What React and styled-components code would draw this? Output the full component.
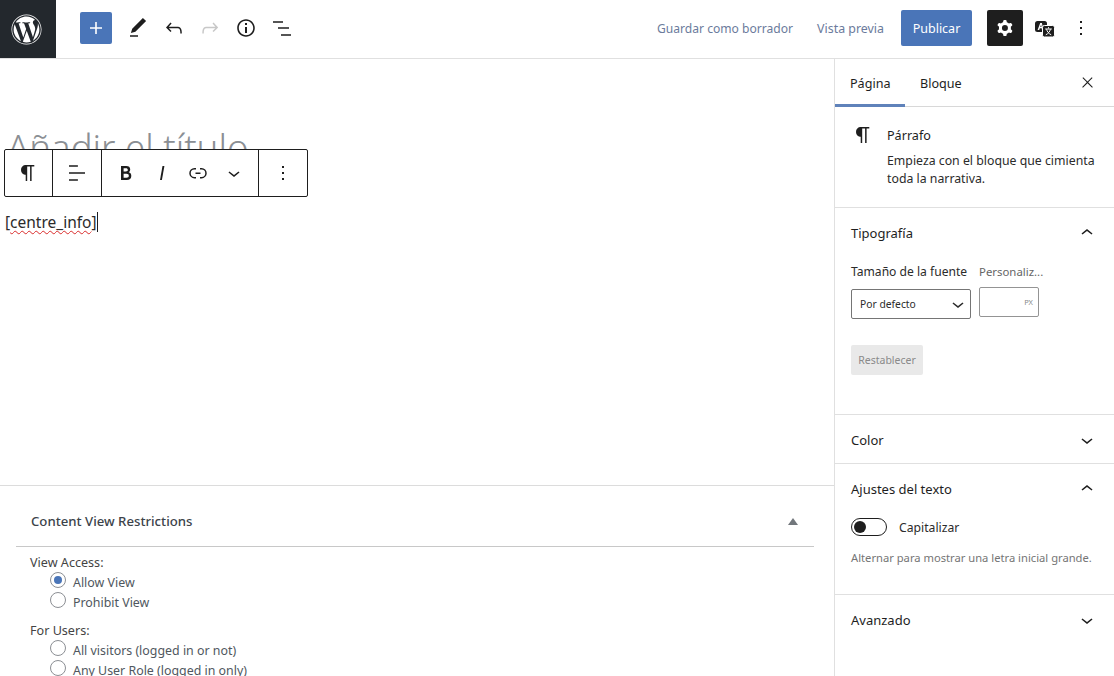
import React from "react";
import styled, { createGlobalStyle } from "styled-components";
import { FaWordpress } from "react-icons/fa";

const FONT = `"Noto Sans", "Open Sans", sans-serif`;

const Global = createGlobalStyle`
  html, body { margin: 0; padding: 0; height: 676px; overflow: hidden; background: #fff; }
  body { font-family: ${FONT}; font-size: 13px; color: #1e1e1e; -webkit-font-smoothing: antialiased; }
  * { box-sizing: border-box; }
`;

const P = {
  plus: "M18 11.2h-5.2V6h-1.6v5.2H6v1.6h5.2V18h1.6v-5.2H18z",
  pencil: "M20.1 5.1L16.9 2 6.2 12.7l-1.3 4.4 4.5-1.3L20.1 5.1zM4 20.8h8v-1.5H4v1.5z",
  undo: "M18.3 11.7c-.6-.6-1.4-.9-2.3-.9H6.7l2.9-3.3-1.1-1-4.5 5L8.5 16l1-1-2.7-2.7H16c.5 0 .9.2 1.3.5 1 1 1 3.4 1 4.5v.3h1.5v-.2c0-1.5 0-4.3-1.5-5.7z",
  redo: "M15.6 6.5l-1.1 1 2.9 3.3H8c-.9 0-1.7.3-2.3.9-1.4 1.5-1.4 4.2-1.4 5.6v.2h1.5v-.3c0-1.1 0-3.5 1-4.5.3-.3.7-.5 1.3-.5h9.2L14.5 15l1.1 1.1 4.6-4.6-4.6-5z",
  info: "M12 3.2c-4.8 0-8.8 3.9-8.8 8.8 0 4.8 3.9 8.8 8.8 8.8 4.8 0 8.8-3.9 8.8-8.8 0-4.8-4-8.8-8.8-8.8zm0 16c-4 0-7.2-3.3-7.2-7.2C4.8 8 8 4.8 12 4.8s7.2 3.3 7.2 7.2c0 4-3.2 7.2-7.2 7.2zM11 17h2v-6h-2v6zm0-8h2V7h-2v2z",
  list: "M3 5.2h10v1.6H3zM8 11.2h11v1.6H8zM11 18.2h10v1.6H11z",
  para: "M18.3 4H9.9v-.1l-.9.2c-2.3.4-4 2.4-4 4.8s1.7 4.4 4 4.8l.7.1V20h1.5V5.5h2.9V20h1.5V5.5h2.7V4z",
  align: "M4 19.8h8.9v-1.5H4v1.5zm8.9-15.6H4v1.5h8.9V4.2zm-8.9 7v1.5h16v-1.5H4z",
  bold: "M14.7 11.3c1-.6 1.5-1.6 1.5-3 0-2.3-1.3-3.4-4-3.4H7v14h5.8c1.4 0 2.5-.3 3.3-1 .8-.7 1.2-1.7 1.2-2.9.1-1.9-.8-3.1-2.6-3.7zm-5.1-4h2.3c.6 0 1.1.1 1.4.4.3.3.5.7.5 1.2s-.2 1-.5 1.2c-.3.3-.8.4-1.4.4H9.6V7.3zm4.6 9c-.4.3-1 .4-1.7.4H9.6v-3.9h2.9c.7 0 1.3.2 1.7.5.4.3.6.8.6 1.5s-.2 1.2-.6 1.5z",
  italic: "M12.5 5L10 19h1.9l2.5-14z",
  link: "M10 17.389H8.444A5.194 5.194 0 1 1 8.444 7H10v1.5H8.444a3.694 3.694 0 0 0 0 7.389H10v1.5ZM14 7h1.556a5.194 5.194 0 0 1 0 10.39H14v-1.5h1.556a3.694 3.694 0 0 0 0-7.39H14V7Zm-4.5 6h5v-1.5h-5V13Z",
  down: "M17.5 11.6L12 16l-5.5-4.4.9-1.2L12 14l4.5-3.6 1 1.2z",
  up: "M6.5 12.4L12 8l5.5 4.4-.9 1.2L12 10l-4.5 3.6-1-1.2z",
  more: "M13 19h-2v-2h2v2zm0-6h-2v-2h2v2zm0-6h-2V5h2v2z",
  close: "M13 11.8l6.1-6.3-1-1-6.1 6.2-6.1-6.2-1 1 6.1 6.3-6.5 6.7 1 1 6.5-6.6 6.5 6.6 1-1z",
  cog: "M10.289 4.836A1 1 0 0 1 11.275 4h1.306a1 1 0 0 1 .987.836l.244 1.466c.787.26 1.503.679 2.108 1.218l1.393-.522a1 1 0 0 1 1.216.437l.653 1.13a1 1 0 0 1-.23 1.273l-1.148.944a6.025 6.025 0 0 1 0 2.435l1.149.946a1 1 0 0 1 .23 1.272l-.653 1.13a1 1 0 0 1-1.216.437l-1.394-.522c-.605.54-1.32.958-2.108 1.218l-.244 1.466a1 1 0 0 1-.987.836h-1.306a1 1 0 0 1-.986-.836l-.244-1.466a5.995 5.995 0 0 1-2.108-1.218l-1.394.522a1 1 0 0 1-1.217-.436l-.653-1.131a1 1 0 0 1 .23-1.272l1.149-.946a6.026 6.026 0 0 1 0-2.435l-1.148-.944a1 1 0 0 1-.23-1.272l.653-1.131a1 1 0 0 1 1.217-.437l1.393.522a5.994 5.994 0 0 1 2.108-1.218l.244-1.466ZM14.929 12a3 3 0 1 1-6 0 3 3 0 0 1 6 0Z",
};

const Icon = ({ d, size = 24, color = "currentColor" }) => (
  <svg width={size} height={size} viewBox="0 0 24 24" fill={color} fillRule="evenodd" clipRule="evenodd" style={{ display: "block" }}>
    <path d={d} />
  </svg>
);

const TranslateIcon = () => (
  <svg width="22" height="20" viewBox="0 0 22 20" style={{ display: "block" }}>
    <rect x="1" y="3" width="12" height="11" rx="2.5" fill="#1e1e1e" />
    <path d="M3.6 12 6.2 5h1.7l1.5 7H8l-.3-1.7H5.8L5.2 12zM6.3 8.9h1.2l-.4-2.3z" fill="#fff" />
    <rect x="8.5" y="7.5" width="12" height="11.5" rx="1.8" fill="#1e1e1e" stroke="#fff" strokeWidth="1" />
    <path d="M14.5 9.2v1.3M11.2 11h6.6M12.6 11.2c.4 2.2 2 4.4 4.6 5.6M16.4 11.2c-.4 2.2-2 4.4-4.6 5.6" stroke="#fff" strokeWidth="1" fill="none" />
  </svg>
);

const Page = styled.div`
  width: 1114px;
  height: 676px;
  display: flex;
  flex-direction: column;
  overflow: hidden;
`;

const Header = styled.header`
  height: 59px;
  flex: none;
  display: flex;
  align-items: center;
  border-bottom: 1px solid #e0e0e0;
`;

const Logo = styled.div`
  width: 56px;
  height: 58px;
  padding-right: 4px;
  background: #23282d;
  color: #fff;
  display: flex;
  align-items: center;
  justify-content: center;
`;

const Tools = styled.div`
  display: flex;
  align-items: center;
  margin-left: 24px;
  padding-bottom: 2px;
`;

const Inserter = styled.button`
  width: 32px;
  height: 32px;
  margin-right: 8px;
  padding: 0;
  border: 0;
  border-radius: 2px;
  background: #4a75b8;
  color: #fff;
  display: flex;
  align-items: center;
  justify-content: center;
`;

const ToolButton = styled.button`
  width: 36px;
  height: 36px;
  padding: 0;
  border: 0;
  border-radius: 2px;
  margin-right: ${(p) => (p.$active ? "4px" : "0")};
  background: ${(p) => (p.$active ? "#1e1e1e" : "transparent")};
  color: ${(p) => (p.$active ? "#fff" : p.$muted ? "#c8c8c8" : "#1e1e1e")};
  display: flex;
  align-items: center;
  justify-content: center;
`;

const Actions = styled.div`
  margin-left: auto;
  display: flex;
  align-items: center;
  padding: 0 15px 2px 0;
`;

const LinkButton = styled.span`
  font-size: ${(p) => p.$size}px;
  color: #6b7b9c;
  margin-right: ${(p) => p.$gap}px;
  white-space: nowrap;
`;

const Publish = styled.button`
  width: 71px;
  height: 36px;
  margin-right: 15px;
  border: 0;
  border-radius: 2px;
  background: #4a75b8;
  color: #fff;
  font: 12.5px ${FONT};
  padding: 0;
`;

const Body = styled.div`
  flex: 1;
  min-height: 0;
  display: flex;
`;

const Main = styled.main`
  flex: 1;
  min-width: 0;
  display: flex;
  flex-direction: column;
`;

const Editor = styled.div`
  position: relative;
  height: 427px;
  flex: none;
  border-bottom: 1px solid #dcdcdc;
  padding: 64px 0 0 7px;
`;

const Title = styled.div`
  font-size: 36.6px;
  font-weight: 300;
  line-height: 48px;
  height: 48px;
  color: #8b8f94;
  white-space: nowrap;
`;

const Paragraph = styled.p`
  margin: 38px 0 0 -2px;
  font-size: 15.5px;
  line-height: 26px;
  color: #2b2b2b;
  display: flex;
  align-items: center;
`;

const Misspelled = styled.span`
  text-decoration: underline wavy #d92b2b 1px;
  text-underline-offset: 2px;
`;

const Caret = styled.span`
  width: 1px;
  height: 20px;
  background: #1e1e1e;
`;

const BlockToolbar = styled.div`
  position: absolute;
  left: 4px;
  top: 90px;
  height: 48px;
  display: flex;
  background: #fff;
  border: 1px solid #1e1e1e;
  border-radius: 2px;
`;

const ToolbarGroup = styled.div`
  display: flex;
  align-items: center;
  padding: 0 ${(p) => p.$pad || 0}px;
  & + & { border-left: 1px solid #1e1e1e; }
`;

const ToolbarButton = styled.div`
  width: ${(p) => p.$w || 36}px;
  height: 46px;
  padding-right: ${(p) => p.$nudge || 0}px;
  display: flex;
  align-items: center;
  justify-content: center;
  color: #1e1e1e;
`;

const MetaBox = styled.section`
  margin: 0 20px 0 16px;
`;

const MetaHead = styled.div`
  height: 61px;
  display: flex;
  align-items: center;
  justify-content: space-between;
  padding: 10px 16px 0 15px;
  border-bottom: 1px solid #c8c8c8;
`;

const MetaTitle = styled.span`
  font-size: 13.2px;
  font-weight: 500;
  color: #3c434a;
`;

const Triangle = styled.span`
  width: 0;
  height: 0;
  border-left: 5px solid transparent;
  border-right: 5px solid transparent;
  border-bottom: 7px solid #72777c;
`;

const MetaBody = styled.div`
  padding: 6px 0 0 14px;
`;

const MetaLabel = styled.div`
  font-size: 12.6px;
  line-height: 19px;
  color: #444;
  margin-top: ${(p) => p.$mt || 0}px;
`;

const RadioRow = styled.label`
  display: flex;
  align-items: center;
  height: 20px;
  padding-left: 20px;
  font-size: 12.4px;
  color: #50575e;
`;

const Radio = styled.span`
  width: 16px;
  height: 16px;
  margin: -4px 7px 0 0;
  border-radius: 50%;
  border: 1px solid #8c8f94;
  background: #fff;
  display: flex;
  align-items: center;
  justify-content: center;
  &::after {
    content: "";
    display: ${(p) => (p.$on ? "block" : "none")};
    width: 8px;
    height: 8px;
    border-radius: 50%;
    background: #4a75b8;
  }
`;

const Sidebar = styled.aside`
  width: 280px;
  flex: none;
  border-left: 1px solid #e0e0e0;
`;

const Tabs = styled.div`
  height: 48px;
  display: flex;
  align-items: center;
  border-bottom: 1px solid #d8d8d8;
`;

const Tab = styled.div`
  height: 48px;
  width: ${(p) => p.$w}px;
  padding-left: 15px;
  display: flex;
  align-items: center;
  font-size: 12.6px;
  color: #1e1e1e;
  border-bottom: ${(p) => (p.$active ? "3px solid #5f82ba" : "0")};
  padding-top: ${(p) => (p.$active ? "5px" : "2px")};
`;

const TabClose = styled.div`
  margin-left: auto;
  margin-right: 18px;
  color: #1e1e1e;
`;

const BlockCard = styled.div`
  height: 101px;
  padding: 16px 16px 0 16px;
  display: flex;
  border-bottom: 1px solid #e0e0e0;
`;

const CardIcon = styled.div`
  width: 36px;
  flex: none;
`;

const CardTitle = styled.div`
  font-size: 12.6px;
  line-height: 24px;
  padding-top: 1px;
  color: #1e1e1e;
`;

const CardText = styled.div`
  font-size: 12.3px;
  line-height: 18px;
  margin-top: 4px;
  color: #2b2b2b;
`;

const Panel = styled.div`
  border-bottom: ${(p) => (p.$last ? "0" : "1px solid #e0e0e0")};
  height: ${(p) => p.$h}px;
`;

const PanelHead = styled.div`
  height: 50px;
  padding: 0 15px 0 16px;
  display: flex;
  align-items: center;
  justify-content: space-between;
  font-size: 13px;
  color: #1e1e1e;
`;

const PanelBody = styled.div`
  padding: ${(p) => p.$top || 0}px 15px 0 16px;
`;

const FontRow = styled.div`
  display: flex;
  align-items: flex-start;
  gap: 8px;
`;

const SizeCol = styled.div`
  width: 120px;
`;

const CustomCol = styled.div`
  width: 60px;
`;

const FieldLabel = styled.div`
  font-size: ${(p) => p.$size}px;
  line-height: 18px;
  height: 18px;
  color: ${(p) => p.$color};
  white-space: nowrap;
  margin-top: ${(p) => p.$mt}px;
`;

const SelectBox = styled.div`
  height: 30px;
  margin-top: 8px;
  padding: 0 0 0 8px;
  display: flex;
  align-items: center;
  justify-content: space-between;
  border: 1px solid #757575;
  border-radius: 2px;
  font-size: 10.3px;
  color: #2b2b2b;
`;

const PxInput = styled.div`
  height: 30px;
  margin-top: 6px;
  padding-right: 5px;
  display: flex;
  align-items: center;
  justify-content: flex-end;
  border: 1px solid #949494;
  border-radius: 2px;
  font-size: 7.5px;
  color: #8a8a8a;
`;

const Reset = styled.div`
  width: 72px;
  height: 30px;
  margin-top: 26px;
  display: flex;
  align-items: center;
  justify-content: center;
  background: #e9e9e9;
  border-radius: 2px;
  font-size: 10.5px;
  color: #8a8a8a;
`;

const ToggleRow = styled.div`
  display: flex;
  align-items: center;
  gap: 12px;
  font-size: 12.2px;
  color: #2b2b2b;
  height: 18px;
`;

const Toggle = styled.span`
  width: 36px;
  height: 18px;
  border: 1px solid #1e1e1e;
  border-radius: 9px;
  padding: 2px;
  display: flex;
  &::before {
    content: "";
    width: 12px;
    height: 12px;
    border-radius: 50%;
    background: #1e1e1e;
  }
`;

const Help = styled.div`
  margin-top: 13px;
  font-size: 11.2px;
  line-height: 18px;
  color: #757575;
  white-space: nowrap;
`;

export default function App() {
  return (
    <Page>
      <Global />
      <Header>
        <Logo><FaWordpress size={31} /></Logo>
        <Tools>
          <Inserter><Icon d={P.plus} /></Inserter>
          <ToolButton><Icon d={P.pencil} /></ToolButton>
          <ToolButton><Icon d={P.undo} /></ToolButton>
          <ToolButton $muted><Icon d={P.redo} /></ToolButton>
          <ToolButton><Icon d={P.info} /></ToolButton>
          <ToolButton><Icon d={P.list} /></ToolButton>
        </Tools>
        <Actions>
          <LinkButton $size={12.1} $gap={24}>Guardar como borrador</LinkButton>
          <LinkButton $size={12.4} $gap={17}>Vista previa</LinkButton>
          <Publish>Publicar</Publish>
          <ToolButton $active><Icon d={P.cog} /></ToolButton>
          <ToolButton><TranslateIcon /></ToolButton>
          <ToolButton><Icon d={P.more} /></ToolButton>
        </Actions>
      </Header>
      <Body>
        <Main>
          <Editor>
            <Title>Añadir el título</Title>
            <Paragraph>[<Misspelled>centre_info</Misspelled>]<Caret /></Paragraph>
            <BlockToolbar>
              <ToolbarGroup><ToolbarButton $w={47} $nudge={2}><Icon d={P.para} /></ToolbarButton></ToolbarGroup>
              <ToolbarGroup><ToolbarButton $w={48}><Icon d={P.align} /></ToolbarButton></ToolbarGroup>
              <ToolbarGroup $pad={6}>
                <ToolbarButton><Icon d={P.bold} /></ToolbarButton>
                <ToolbarButton><Icon d={P.italic} /></ToolbarButton>
                <ToolbarButton><Icon d={P.link} /></ToolbarButton>
                <ToolbarButton><Icon d={P.down} /></ToolbarButton>
              </ToolbarGroup>
              <ToolbarGroup><ToolbarButton $w={48}><Icon d={P.more} /></ToolbarButton></ToolbarGroup>
            </BlockToolbar>
          </Editor>
          <MetaBox>
            <MetaHead>
              <MetaTitle>Content View Restrictions</MetaTitle>
              <Triangle />
            </MetaHead>
            <MetaBody>
              <MetaLabel>View Access:</MetaLabel>
              <RadioRow><Radio $on />Allow View</RadioRow>
              <RadioRow><Radio />Prohibit View</RadioRow>
              <MetaLabel $mt={9}>For Users:</MetaLabel>
              <RadioRow><Radio />All visitors (logged in or not)</RadioRow>
              <RadioRow><Radio />Any User Role (logged in only)</RadioRow>
            </MetaBody>
          </MetaBox>
        </Main>
        <Sidebar>
          <Tabs>
            <Tab $active $w={70}>Página</Tab>
            <Tab $w={70}>Bloque</Tab>
            <TabClose><Icon d={P.close} size={17} /></TabClose>
          </Tabs>
          <BlockCard>
            <CardIcon><Icon d={P.para} /></CardIcon>
            <div>
              <CardTitle>Párrafo</CardTitle>
              <CardText>Empieza con el bloque que cimienta<br />toda la narrativa.</CardText>
            </div>
          </BlockCard>
          <Panel $h={207}>
            <PanelHead><span>Tipografía</span><Icon d={P.up} /></PanelHead>
            <PanelBody>
              <FontRow>
                <SizeCol>
                  <FieldLabel $size={12.1} $color="#2b2b2b" $mt={5}>Tamaño de la fuente</FieldLabel>
                  <SelectBox>Por defecto<Icon d={P.down} size={24} /></SelectBox>
                </SizeCol>
                <CustomCol>
                  <FieldLabel $size={11.4} $color="#666" $mt={5}>Personaliz...</FieldLabel>
                  <PxInput>PX</PxInput>
                </CustomCol>
              </FontRow>
              <Reset>Restablecer</Reset>
            </PanelBody>
          </Panel>
          <Panel $h={49}>
            <PanelHead><span>Color</span><Icon d={P.down} /></PanelHead>
          </Panel>
          <Panel $h={131}>
            <PanelHead><span>Ajustes del texto</span><Icon d={P.up} /></PanelHead>
            <PanelBody $top={4}>
              <ToggleRow><Toggle />Capitalizar</ToggleRow>
              <Help>Alternar para mostrar una letra inicial grande.</Help>
            </PanelBody>
          </Panel>
          <Panel $last $h={50}>
            <PanelHead><span>Avanzado</span><Icon d={P.down} /></PanelHead>
          </Panel>
        </Sidebar>
      </Body>
    </Page>
  );
}
